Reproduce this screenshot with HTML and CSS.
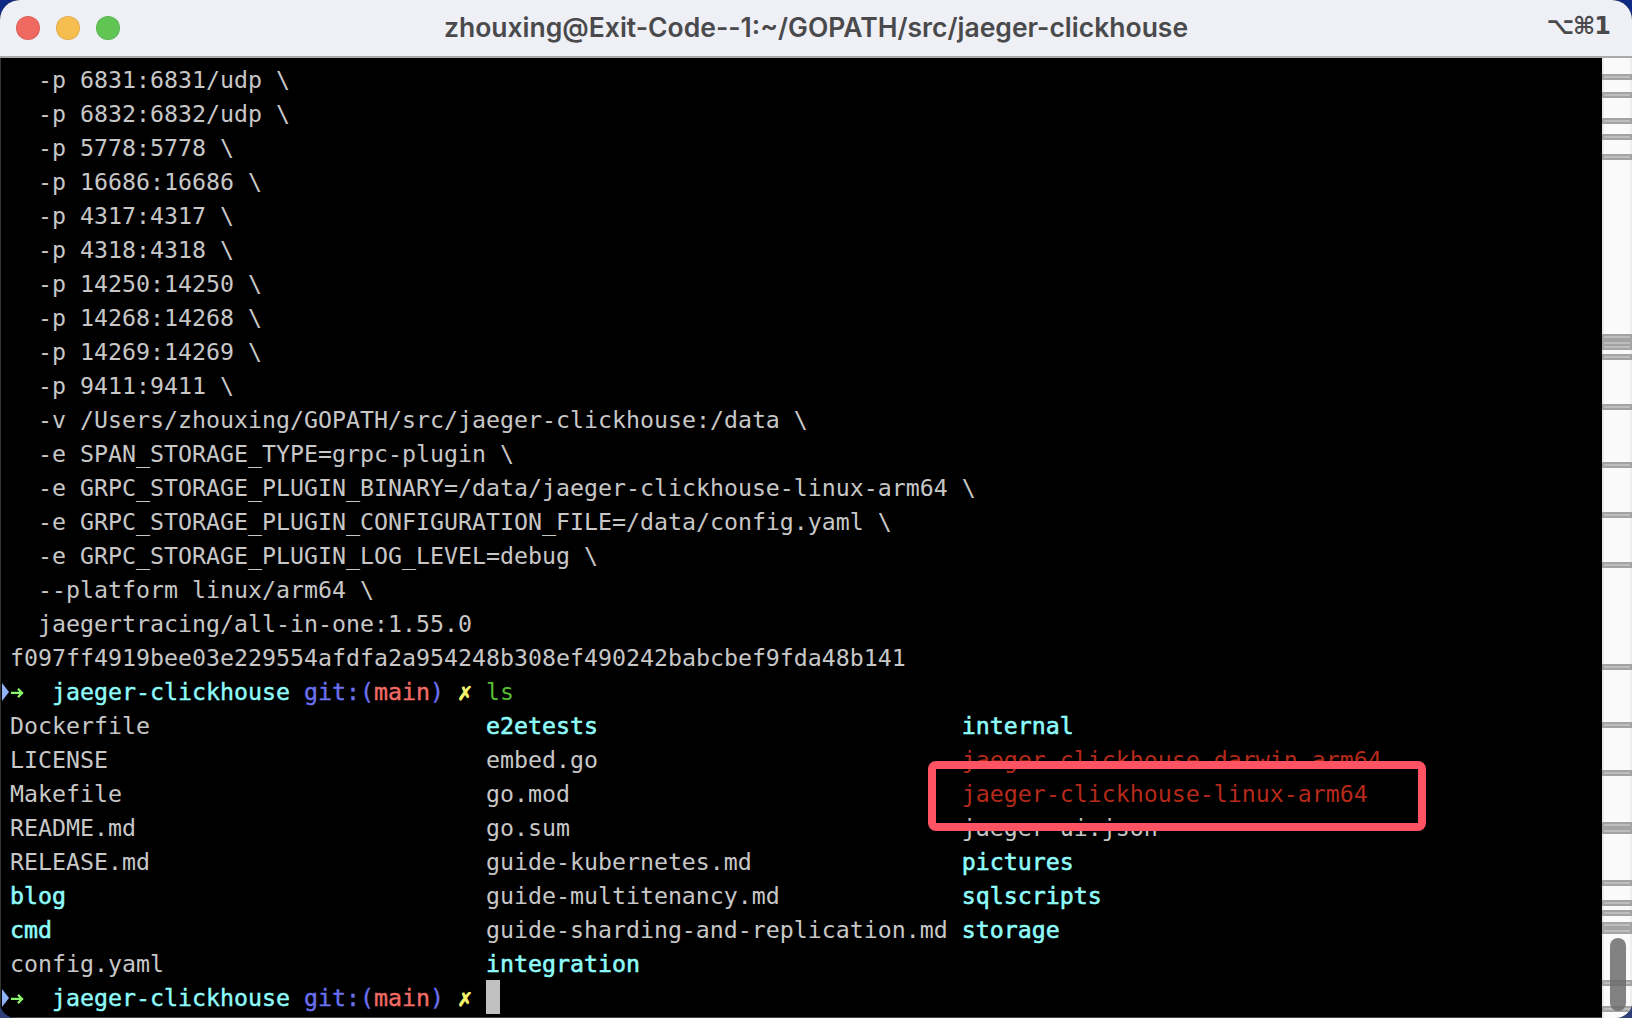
FILE: index.html
```html
<!DOCTYPE html>
<html lang="en">
<head>
<meta charset="utf-8">
<title>zhouxing@Exit-Code--1:~/GOPATH/src/jaeger-clickhouse</title>
<link rel="stylesheet" href="styles.css">
</head>
<body>
<div class="window">
  <header class="titlebar">
    <div class="lights">
      <span class="light light-red"></span>
      <span class="light light-yellow"></span>
      <span class="light light-green"></span>
    </div>
    <div class="title">zhouxing@Exit-Code--1:~/GOPATH/src/jaeger-clickhouse</div>
    <div class="shortcut">⌥⌘1</div>
  </header>
  <main class="body">
    <div class="terminal">
      <div class="line">  -p 6831:6831/udp \</div>
      <div class="line">  -p 6832:6832/udp \</div>
      <div class="line">  -p 5778:5778 \</div>
      <div class="line">  -p 16686:16686 \</div>
      <div class="line">  -p 4317:4317 \</div>
      <div class="line">  -p 4318:4318 \</div>
      <div class="line">  -p 14250:14250 \</div>
      <div class="line">  -p 14268:14268 \</div>
      <div class="line">  -p 14269:14269 \</div>
      <div class="line">  -p 9411:9411 \</div>
      <div class="line">  -v /Users/zhouxing/GOPATH/src/jaeger-clickhouse:/data \</div>
      <div class="line">  -e SPAN_STORAGE_TYPE=grpc-plugin \</div>
      <div class="line">  -e GRPC_STORAGE_PLUGIN_BINARY=/data/jaeger-clickhouse-linux-arm64 \</div>
      <div class="line">  -e GRPC_STORAGE_PLUGIN_CONFIGURATION_FILE=/data/config.yaml \</div>
      <div class="line">  -e GRPC_STORAGE_PLUGIN_LOG_LEVEL=debug \</div>
      <div class="line">  --platform linux/arm64 \</div>
      <div class="line">  jaegertracing/all-in-one:1.55.0</div>
      <div class="line">f097ff4919bee03e229554afdfa2a954248b308ef490242babcbef9fda48b141</div>
      <div class="line prompt"><span class="mark"></span><svg class="arrow" viewBox="0 0 15 34" aria-hidden="true"><path d="M1 18H13M8.5 13.5L13 18L8.5 22.5"/></svg>  <span class="dir">jaeger-clickhouse</span> <span class="git">git:(</span><span class="branch">main</span><span class="git">)</span> <span class="cell dirty">✗</span> <span class="cmd">ls</span></div>
      <div class="listing">
        <span>Dockerfile</span><span class="folder">e2etests</span><span class="folder">internal</span>
        <span>LICENSE</span><span>embed.go</span><span class="exec">jaeger-clickhouse-darwin-arm64</span>
        <span>Makefile</span><span>go.mod</span><span class="exec">jaeger-clickhouse-linux-arm64</span>
        <span>README.md</span><span>go.sum</span><span>jaeger-ui.json</span>
        <span>RELEASE.md</span><span>guide-kubernetes.md</span><span class="folder">pictures</span>
        <span class="folder">blog</span><span>guide-multitenancy.md</span><span class="folder">sqlscripts</span>
        <span class="folder">cmd</span><span>guide-sharding-and-replication.md</span><span class="folder">storage</span>
        <span>config.yaml</span><span class="folder">integration</span><span></span>
      </div>
      <div class="line prompt"><span class="mark"></span><svg class="arrow" viewBox="0 0 15 34" aria-hidden="true"><path d="M1 18H13M8.5 13.5L13 18L8.5 22.5"/></svg>  <span class="dir">jaeger-clickhouse</span> <span class="git">git:(</span><span class="branch">main</span><span class="git">)</span> <span class="cell dirty">✗</span> <span class="cursor"></span></div>
    </div>
    <aside class="scrollbar">
      <i class="tick" style="top:74px"></i>
      <i class="tick" style="top:92px"></i>
      <i class="tick" style="top:118px"></i>
      <i class="tick" style="top:134px"></i>
      <i class="tick" style="top:154px"></i>
      <i class="tick" style="top:334px"></i>
      <i class="tick" style="top:340px"></i>
      <i class="tick" style="top:344px"></i>
      <i class="tick" style="top:354px"></i>
      <i class="tick" style="top:404px"></i>
      <i class="tick" style="top:462px"></i>
      <i class="tick" style="top:512px"></i>
      <i class="tick" style="top:562px"></i>
      <i class="tick" style="top:664px"></i>
      <i class="tick" style="top:722px"></i>
      <i class="tick" style="top:770px"></i>
      <i class="tick" style="top:822px"></i>
      <i class="tick" style="top:828px"></i>
      <i class="tick" style="top:880px"></i>
      <i class="tick" style="top:900px"></i>
      <i class="tick" style="top:910px"></i>
      <i class="tick" style="top:922px"></i>
      <i class="tick" style="top:928px"></i>
      <i class="tick" style="top:980px"></i>
      <i class="tick" style="top:1006px"></i>
      <b class="thumb"></b>
    </aside>
  </main>
  <div class="highlight"></div>
</div>
</body>
</html>
```

FILE: styles.css
```css
* { box-sizing: border-box; }
html, body { margin: 0; height: 100%; }
body { background: linear-gradient(#0f2a85, #2e3f78); overflow: hidden; }

.window {
  position: relative;
  height: 1018px;
  display: flex;
  flex-direction: column;
  border-radius: 20px 20px 16px 16px;
  overflow: hidden;
  background: #000;
}

.titlebar {
  flex: 0 0 58px;
  display: grid;
  grid-template-columns: 1fr auto 1fr;
  align-items: center;
  padding: 0 24px;
  background: #eef0f5;
  border-bottom: 2px solid #a9a9a9;
  color: #4a4a4d;
}

.lights { display: flex; gap: 16px; margin-left: -8px; }
.light { width: 24px; height: 24px; border-radius: 50%; border: 1px solid rgba(0,0,0,.08); }
.light-red { background: #f0695f; }
.light-yellow { background: #f6bd4f; }
.light-green { background: #61c554; }

.title {
  font: 600 26.5px/30px Inter, "Liberation Sans", sans-serif;
  white-space: nowrap;
  padding-bottom: 3px;
}
.shortcut {
  justify-self: end;
  margin-right: -2px;
  font: 700 24px/30px "DejaVu Sans", Inter, sans-serif;
  letter-spacing: -1px;
  padding-bottom: 5px;
}

.body { flex: 1; display: flex; min-height: 0; }

.terminal {
  flex: 1;
  padding: 5px 0 0 9px;
  background: #000;
  border-left: 1px solid #333;
  border-bottom: 1px solid #444;
  color: #c7c7c7;
  font: 400 23.25px/34px "DejaVu Sans Mono", "Liberation Mono", monospace;
}

.line { position: relative; height: 34px; white-space: pre; }

.listing {
  display: grid;
  grid-template-columns: repeat(3, 34ch);
  grid-auto-rows: 34px;
}
.listing span { white-space: pre; }

.folder { color: #8ffcfc; -webkit-text-stroke: .55px #8ffcfc; }
.exec { color: #b5291a; }
.dir { color: #8ffcfc; -webkit-text-stroke: .4px #8ffcfc; }
.git { color: #6a70ee; -webkit-text-stroke: .4px #6a70ee; }
.branch { color: #f26c65; -webkit-text-stroke: .4px #f26c65; }
.cmd { color: #55bd33; }
.cell { display: inline-block; width: 1ch; text-align: center; }
.dirty { color: #f7f66f; font-weight: 700; -webkit-text-stroke: .7px #f7f66f; }

.arrow {
  display: inline-block;
  width: 14px;
  height: 34px;
  vertical-align: top;
}
.arrow path { fill: none; stroke: #8cf56f; stroke-width: 2.4; }

.mark {
  position: absolute;
  left: -8px;
  top: 8px;
  width: 0;
  height: 0;
  border-style: solid;
  border-width: 9.5px 0 9.5px 7px;
  border-color: transparent transparent transparent #8fb3f5;
}

.cursor {
  display: inline-block;
  width: 14px;
  height: 34px;
  background: #c0c0c0;
  vertical-align: top;
  transform: translateY(-1px);
}

.scrollbar {
  position: relative;
  flex: 0 0 30px;
  background: #fafafa;
  border-left: 2px solid #ebebeb;
  border-right: 2px solid #eeeeee;
}

.tick {
  position: absolute;
  left: -2px;
  right: -2px;
  height: 6px;
  margin-top: -58px;
  background: #bdbdbd;
  border: 2px solid #a3a3a3;
}

.thumb {
  position: absolute;
  left: 6px;
  width: 16px;
  top: 880px;
  height: 73px;
  border-radius: 8px;
  background: rgba(108,108,108,.85);
}

.highlight {
  position: absolute;
  left: 928px;
  top: 761px;
  width: 498px;
  height: 70px;
  border: 8px solid #ff5364;
  border-radius: 8px;
}
```
